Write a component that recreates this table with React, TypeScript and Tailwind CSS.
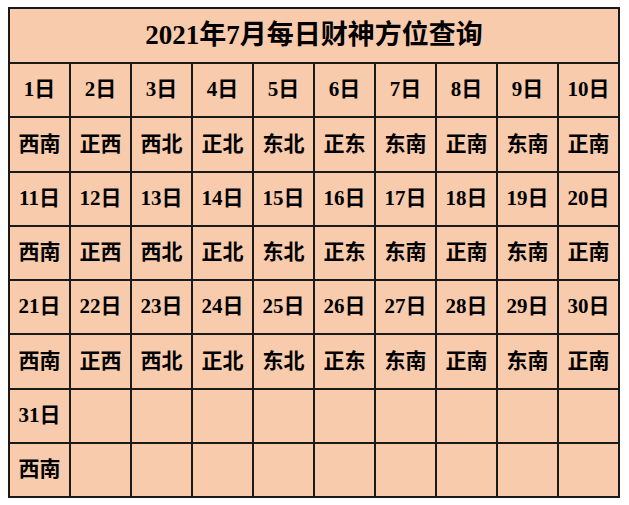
import React from "react";

const dirs = ["西南", "正西", "西北", "正北", "东北", "正东", "东南", "正南", "东南", "正南"];

const rows: string[][] = [];
for (let r = 0; r < 3; r++) {
  rows.push(Array.from({ length: 10 }, (_, i) => `${r * 10 + i + 1}日`));
  rows.push(dirs);
}
rows.push(["31日", "", "", "", "", "", "", "", "", ""]);
rows.push(["西南", "", "", "", "", "", "", "", "", ""]);

const App: React.FC = () => {
  return (
    <div
      className="w-[629px] h-[505px] bg-white pl-[8px] pt-[7px]"
      style={{ fontFamily: '"Liberation Serif", "Noto Sans CJK SC", serif' }}
    >
      <div className="w-[612px] grid grid-cols-10 gap-[2px] p-[2px] bg-[#1a1a1a]">
        <div className="col-span-10 h-[53px] bg-[#f8cbad] flex items-center justify-center text-[27px] font-bold text-black">
          2021年7月每日财神方位查询
        </div>
        {rows.map((row, ri) =>
          row.map((cell, ci) => (
            <div
              key={`${ri}-${ci}`}
              className="h-[52.25px] bg-[#f8cbad] flex items-center justify-center text-[21px] font-bold text-black"
            >
              {cell}
            </div>
          ))
        )}
      </div>
    </div>
  );
};

export default App;
